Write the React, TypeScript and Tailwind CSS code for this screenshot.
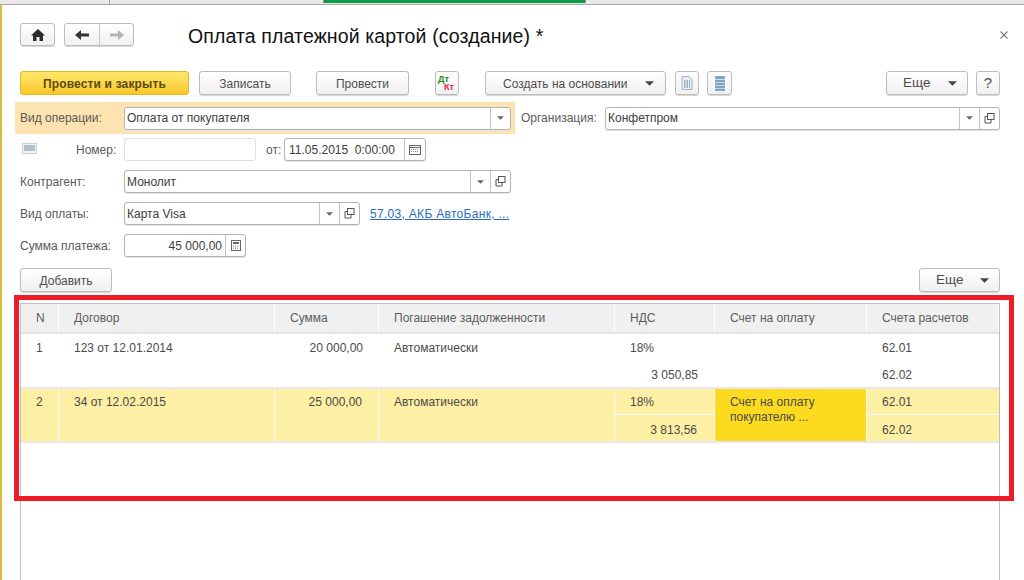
import React from "react";

const Caret = ({ small = false }: { small?: boolean }) => (
  <svg width={small ? 7 : 9} height={small ? 4 : 5} viewBox="0 0 8 4" className="shrink-0">
    <path d="M0 0H8L4 4Z" fill={small ? "#666" : "#444"} />
  </svg>
);

const OpenIcon = () => (
  <svg width="11" height="11" viewBox="0 0 11 11" fill="none" stroke="#555" strokeWidth="1">
    <rect x="3.5" y="0.5" width="6.5" height="6" fill="#fff" />
    <path d="M3.5 3.5H1V10H7V6.5" />
  </svg>
);

const Btn = ({ className = "", children }: { className?: string; children: React.ReactNode }) => (
  <div
    className={`flex items-center justify-center h-full shrink-0 rounded-[3px] border border-[#bcbcbc] bg-gradient-to-b from-white to-[#f0f0f0] shadow-[0_1px_0_#d8d8d8] text-[12px] text-[#4d4d4d] ${className}`}
  >
    {children}
  </div>
);

const Seg = ({ children }: { children: React.ReactNode }) => (
  <div className="flex items-center justify-center w-[20px] h-full border-l border-[#c4c4c4] shrink-0">{children}</div>
);

const Field = ({
  className = "",
  children,
  segs,
  right = false,
}: {
  className?: string;
  children?: React.ReactNode;
  segs?: React.ReactNode;
  right?: boolean;
}) => (
  <div className={`flex items-stretch h-[23px] shrink-0 bg-white rounded-[3px] border border-[#b4b4b4] shadow-[0_1px_0_#e4e4e4] text-[12px] text-[#3c3c3c] ${className}`}>
    <div className={`flex-1 flex items-center pl-[2px] pr-[3px] whitespace-pre ${right ? "justify-end" : ""}`}>{children}</div>
    {segs}
  </div>
);

const Label = ({ className = "w-[104px]", children }: { className?: string; children: React.ReactNode }) => (
  <div className={`shrink-0 text-[12px] text-[#5a5a5a] ${className}`}>{children}</div>
);

const Cell = ({ className = "", children }: { className?: string; children?: React.ReactNode }) => (
  <div className={`text-[12px] text-[#4a4a4a] ${className}`}>{children}</div>
);

const HeadCell = ({ className = "", children }: { className?: string; children?: React.ReactNode }) => (
  <div className={`flex items-center h-full bg-[#f0f0f0] border-r border-white text-[12px] text-[#5c5c5c] ${className}`}>{children}</div>
);

const gridCols = "grid grid-cols-[38px_216px_104px_236px_100px_152px_132px]";

export default function App() {
  return (
    <div className="relative w-[1024px] h-[580px] overflow-hidden bg-white font-['Liberation_Sans',Arial,sans-serif]">
      {/* window top strip */}
      <div className="flex h-[5px] bg-[#e9e9e9] border-b border-[#a8a8a8]">
        <div className="w-[110px] border-r border-[#a8a8a8]" />
        <div className="w-[213px]" />
        <div className="w-[263px] h-[3px] bg-[#0f9a4a] border-x border-[#8a8a8a]" />
      </div>

      <div className="flex h-[575px]">
        <div className="w-[2px] h-full bg-[#d8bd3c] shrink-0" />
        <div className="flex-1 flex flex-col min-w-0 pl-[18px] pr-[24px]">
          {/* nav */}
          <div className="flex items-center h-[23px] mt-[18px]">
            <Btn className="w-[35px]">
              <svg width="14" height="12" viewBox="0 0 14 12">
                <path d="M7 0L14 6.5H12V12H8.5V8H5.5V12H2V6.5H0Z" fill="#2c2c2c" />
              </svg>
            </Btn>
            <Btn className="w-[70px] ml-[9px] !justify-start">
              <div className="flex items-center justify-center w-[35px] h-full border-r border-[#c8c8c8]">
                <svg width="14" height="10" viewBox="0 0 14 10">
                  <path d="M0 5L6 0V3.4H14V6.6H6V10Z" fill="#333" />
                </svg>
              </div>
              <div className="flex items-center justify-center flex-1 h-full">
                <svg width="14" height="10" viewBox="0 0 14 10">
                  <path d="M14 5L8 0V3.4H0V6.6H8V10Z" fill="#b4b4b4" />
                </svg>
              </div>
            </Btn>
            <div className="ml-[54px] pt-[3px] text-[19.5px] leading-[23px] text-[#111] tracking-[0.12px] whitespace-nowrap">
              Оплата платежной картой (создание) *
            </div>
            <svg width="8" height="8" viewBox="0 0 8 8" className="ml-auto mr-[-8px]" stroke="#777" strokeWidth="1.1">
              <path d="M0.5 0.5L7.5 7.5M7.5 0.5L0.5 7.5" />
            </svg>
          </div>

          {/* toolbar */}
          <div className="flex items-center h-[24px] mt-[25px]">
            <div className="flex items-center justify-center h-full w-[169px] pt-[1px] shrink-0 rounded-[3px] border border-[#e6b62a] bg-gradient-to-b from-[#fde869] to-[#fbc724] text-[12px] font-bold text-[#5b4a12] tracking-[0.15px]">
              Провести и закрыть
            </div>
            <Btn className="w-[92px] ml-[10px] pt-[1px]">Записать</Btn>
            <Btn className="w-[93px] ml-[25px] pt-[1px]">Провести</Btn>
            <Btn className="w-[24px] ml-[26px]">
              <div className="relative w-[20px] h-[17px] font-bold text-[9px] leading-[9px]">
                <span className="absolute left-[1px] top-0 text-[#1f8a1f]">Дт</span>
                <span className="absolute left-[7px] top-[8px] text-[#f0203a]">Кт</span>
              </div>
            </Btn>
            <Btn className="w-[181px] ml-[26px] pt-[1px] !justify-between pl-[17px] pr-[11px]">
              <span>Создать на основании</span>
              <Caret />
            </Btn>
            <Btn className="w-[24px] ml-[9px]">
              <svg width="12" height="14" viewBox="0 0 12 14">
                <path d="M1 .5H8L11 3.5V13.5H1Z" fill="#e6eff7" stroke="#9db2c6" />
                <path d="M3 5H9M3 7H9M3 9H9M3 11H9" stroke="#5f7488" strokeDasharray="1.5 1" />
              </svg>
            </Btn>
            <Btn className="w-[25px] ml-[8px]">
              <svg width="10" height="15" viewBox="0 0 10 15">
                <rect width="10" height="15" rx="1" fill="#86a2b8" />
                <path d="M0 3.5H10M0 6.5H10M0 9.5H10M0 12.5H10" stroke="#c9d7e2" />
              </svg>
            </Btn>
            <Btn className="w-[82px] ml-auto pt-[1px] !justify-between pl-[16px] pr-[10px] !text-[13.5px]">
              <span>Еще</span>
              <Caret />
            </Btn>
            <Btn className="w-[24px] ml-[8px] !text-[15px]">?</Btn>
          </div>

          {/* row 1 */}
          <div className="flex items-center h-[32px] mt-[7px]">
            <div className="flex items-center h-full w-[500px] -ml-[5px] pl-[5px] pr-[4px] bg-[#fde3b0] shrink-0">
              <Label>Вид операции:</Label>
              <Field className="flex-1" segs={<Seg><Caret small /></Seg>}>
                Оплата от покупателя
              </Field>
            </div>
            <Label className="ml-[6px] w-[84px]">Организация:</Label>
            <Field
              className="flex-1"
              segs={
                <>
                  <Seg><Caret small /></Seg>
                  <Seg><OpenIcon /></Seg>
                </>
              }
            >
              Конфетпром
            </Field>
          </div>

          {/* row 2 */}
          <div className="flex items-center h-[23px] mt-[4px]">
            <div className="w-[56px] shrink-0 pl-[2px] -mt-[3px]">
              <svg width="15" height="11" viewBox="0 0 15 11">
                <rect x="0.5" y="0.5" width="14" height="10" fill="#eef5f5" stroke="#c3d2d4" />
                <path d="M2 3H13M2 5H13M2 7H13" stroke="#7b8a94" />
              </svg>
            </div>
            <Label className="w-[48px]">Номер:</Label>
            <div className="w-[132px] h-[23px] shrink-0 rounded-[3px] border border-[#dedede]" />
            <Label className="ml-[10px] w-[18px]">от:</Label>
            <Field
              className="w-[142px]"
              segs={
                <div className="flex items-center justify-center w-[21px] border-l border-[#c4c4c4]">
                  <svg width="12" height="10" viewBox="0 0 12 10">
                    <rect x="0.5" y="0.5" width="11" height="9" fill="#fff" stroke="#666" />
                    <path d="M0 2.5H12" stroke="#666" />
                    <path d="M2 4.5H10M2 6.5H10" stroke="#888" strokeDasharray="1 1" />
                  </svg>
                </div>
              }
            >
              <span className="ml-[2px]">11.05.2015  0:00:00</span>
            </Field>
          </div>

          {/* row 3 */}
          <div className="flex items-center h-[23px] mt-[9px]">
            <Label>Контрагент:</Label>
            <Field
              className="w-[387px]"
              segs={
                <>
                  <Seg><Caret small /></Seg>
                  <Seg><OpenIcon /></Seg>
                </>
              }
            >
              Монолит
            </Field>
          </div>

          {/* row 4 */}
          <div className="flex items-center h-[23px] mt-[9px]">
            <Label>Вид оплаты:</Label>
            <Field
              className="w-[236px]"
              segs={
                <>
                  <Seg><Caret small /></Seg>
                  <Seg><OpenIcon /></Seg>
                </>
              }
            >
              Карта Visa
            </Field>
            <div className="ml-[10px] text-[12px] text-[#2a6cc4] underline tracking-[0.3px] whitespace-pre">57.03, АКБ АвтоБанк, ...</div>
          </div>

          {/* row 5 */}
          <div className="flex items-center h-[23px] mt-[9px]">
            <Label>Сумма платежа:</Label>
            <Field
              className="w-[122px]"
              right
              segs={
                <div className="flex items-center justify-center w-[20px] border-l border-[#c4c4c4]">
                  <svg width="10" height="11" viewBox="0 0 10 11">
                    <rect x="0.5" y="0.5" width="9" height="10" fill="#fff" stroke="#666" />
                    <rect x="2" y="2" width="6" height="2" fill="#666" />
                    <path d="M2 6H8M2 8.2H8" stroke="#777" strokeDasharray="1 1" />
                  </svg>
                </div>
              }
            >
              45 000,00
            </Field>
          </div>

          {/* table commands */}
          <div className="flex items-center h-[24px] mt-[11px]">
            <Btn className="w-[92px] pt-[1px]">Добавить</Btn>
            <Btn className="w-[81px] ml-auto pt-[1px] !justify-between pl-[16px] pr-[10px] !text-[13.5px]">
              <span>Еще</span>
              <Caret />
            </Btn>
          </div>

          {/* table */}
          <div className="flex-1 mt-[11px] border border-[#c0c0c0] border-b-0">
            <div className={`${gridCols} h-[28px]`}>
              <HeadCell className="pl-[15px]">N</HeadCell>
              <HeadCell className="pl-[15px]">Договор</HeadCell>
              <HeadCell className="pl-[15px]">Сумма</HeadCell>
              <HeadCell className="pl-[15px]">Погашение задолженности</HeadCell>
              <HeadCell className="pl-[15px]">НДС</HeadCell>
              <HeadCell className="pl-[15px]">Счет на оплату</HeadCell>
              <HeadCell className="pl-[15px]">Счета расчетов</HeadCell>
            </div>
            <div className="h-[2px] bg-[#e4e4e4]" />

            {/* row 1 */}
            <div className={`${gridCols} h-[55px] border-b-2 border-[#e8e8e8] bg-white`}>
              <Cell className="pl-[15px] pt-[5px]">1</Cell>
              <Cell className="pl-[15px] pt-[5px]">123 от 12.01.2014</Cell>
              <Cell className="pr-[16px] pt-[5px] text-right">20 000,00</Cell>
              <Cell className="pl-[15px] pt-[5px]">Автоматически</Cell>
              <div className="flex flex-col">
                <Cell className="pl-[15px] pt-[5px] h-[27px]">18%</Cell>
                <Cell className="pr-[17px] pt-[5px] text-right">3 050,85</Cell>
              </div>
              <div />
              <div className="flex flex-col">
                <Cell className="pl-[15px] pt-[5px] h-[27px]">62.01</Cell>
                <Cell className="pl-[15px] pt-[5px]">62.02</Cell>
              </div>
            </div>

            {/* row 2 */}
            <div className={`${gridCols} h-[54px] border-b-2 border-[#e8e8e8] bg-[#fdf0a4]`}>
              <Cell className="pl-[15px] pt-[4px] border-r border-white">2</Cell>
              <Cell className="pl-[15px] pt-[4px] border-r border-white">34 от 12.02.2015</Cell>
              <Cell className="pr-[16px] pt-[4px] text-right border-r border-white">25 000,00</Cell>
              <Cell className="pl-[15px] pt-[4px] border-r border-white">Автоматически</Cell>
              <div className="flex flex-col border-r border-white">
                <Cell className="pl-[15px] pt-[4px] h-[26px] border-b border-white">18%</Cell>
                <Cell className="pr-[17px] pt-[6px] text-right">3 813,56</Cell>
              </div>
              <Cell className="pl-[15px] pt-[6px] pr-[6px] bg-[#fcda1f] border-r border-white leading-[15px] text-[#4a3f10]">
                Счет на оплату покупателю ...
              </Cell>
              <div className="flex flex-col">
                <Cell className="pl-[15px] pt-[4px] h-[26px] border-b border-white">62.01</Cell>
                <Cell className="pl-[15px] pt-[6px]">62.02</Cell>
              </div>
            </div>
          </div>
        </div>
      </div>

      {/* red annotation frame drawn over the screenshot */}
      <div className="absolute left-[14px] top-[295px] w-[1000px] h-[206px] border-[5px] border-[#ee1c25] pointer-events-none" />
    </div>
  );
}
